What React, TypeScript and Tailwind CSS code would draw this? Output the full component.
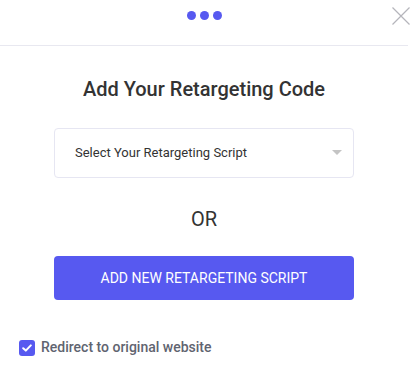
import React from "react";

export default function App() {
  return (
    <div className="relative w-[411px] h-[374px] bg-white overflow-hidden" style={{ fontFamily: "Roboto, 'Liberation Sans', sans-serif" }}>
      <div className="w-[408px] h-[46px] border-b border-[#e8e8f0] flex items-center justify-center">
        <div className="flex gap-[4px] mb-[14px]">
          <span className="w-[9px] h-[9px] rounded-full bg-[#5759f0]" />
          <span className="w-[9px] h-[9px] rounded-full bg-[#5759f0]" />
          <span className="w-[9px] h-[9px] rounded-full bg-[#5759f0]" />
        </div>
      </div>
      <button className="absolute left-[392px] top-[7px] w-[18px] h-[18px]">
        <svg width="18" height="18" viewBox="0 0 18 18" fill="none" stroke="#b5b5bb" strokeWidth="1.2">
          <path d="M0.5 0.5 L17.5 17.5 M17.5 0.5 L0.5 17.5" />
        </svg>
      </button>
      <div className="w-[408px] flex flex-col items-center">
        <h1 className="mt-[31px] text-[20px] leading-[24px] font-medium text-[#333333]">Add Your Retargeting Code</h1>
        <div className="mt-[27px] w-[300px] h-[50px] border border-[#e6e6f2] rounded-[4px] flex items-center justify-between pl-[20px] pr-[8px]">
          <span className="text-[13px] text-[#333333]">Select Your Retargeting Script</span>
          <svg width="10" height="6" viewBox="0 0 10 6" className="mr-[3px]">
            <path d="M0 0 L10 0 L5 5 Z" fill="#c4c4c4" />
          </svg>
        </div>
        <div className="mt-[29px] text-[20px] leading-[24px] text-[#333333]">OR</div>
        <button className="mt-[25px] w-[300px] h-[44px] rounded-[4px] bg-[#5759f0] text-white text-[14px] uppercase">
          Add New Retargeting Script
        </button>
      </div>
      <label className="absolute left-[19px] top-[337px] flex items-center gap-[6px]">
        <span className="w-[16px] h-[16px] rounded-[3px] bg-[#5759f0] flex items-center justify-center">
          <svg width="10" height="8" viewBox="0 0 10 8" fill="none" stroke="white" strokeWidth="2" strokeLinecap="round" strokeLinejoin="round">
            <path d="M1.2 4.2 L3.8 6.6 L8.8 1.4" />
          </svg>
        </span>
        <span className="text-[14px] font-medium text-[#5f6470]">Redirect to original website</span>
      </label>
    </div>
  );
}
